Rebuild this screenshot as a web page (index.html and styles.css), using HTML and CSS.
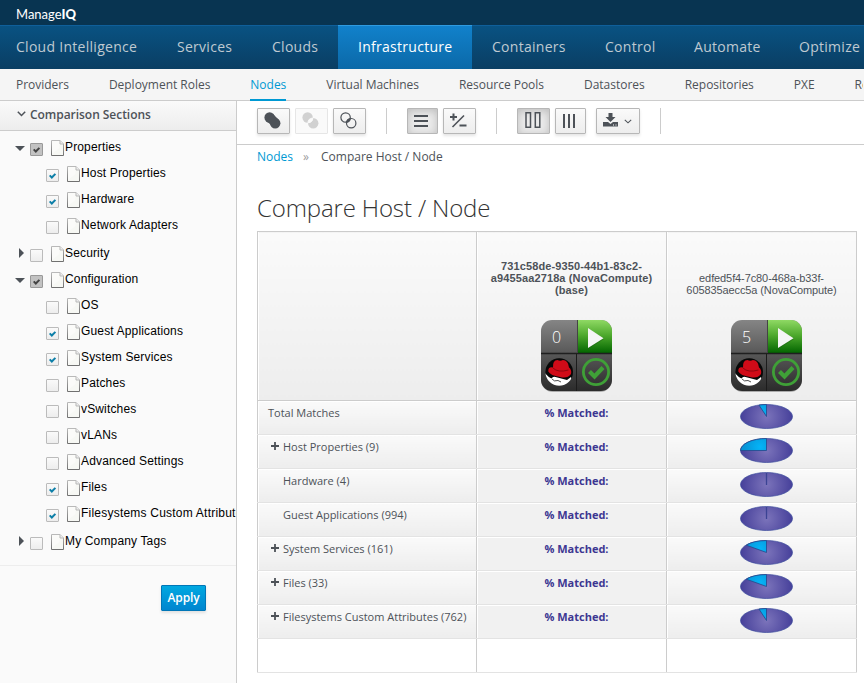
FILE: index.html
```html
<!DOCTYPE html>
<html lang="en">
<head>
<meta charset="utf-8">
<title>ManageIQ: Compare Host / Node</title>
<link rel="stylesheet" href="styles.css">
</head>
<body>
<svg class="defs" aria-hidden="true">
  <defs>
    <linearGradient id="g-page" x1="0" y1="0" x2="0" y2="1"><stop offset="0" stop-color="#b9b9b9"/><stop offset="1" stop-color="#707070"/></linearGradient>
    <linearGradient id="g-dark" x1="0" y1="0" x2="0" y2="1"><stop offset="0" stop-color="#858585"/><stop offset=".48" stop-color="#575757"/><stop offset="1" stop-color="#2b2b2b"/></linearGradient>
    <linearGradient id="g-green" x1="0" y1="0" x2="0" y2="1"><stop offset="0" stop-color="#8fd964"/><stop offset=".45" stop-color="#4faa2e"/><stop offset="1" stop-color="#036500"/></linearGradient>
    <radialGradient id="g-pie" gradientUnits="userSpaceOnUse" cx="26.5" cy="12.5" r="26"><stop offset="0" stop-color="#7c74bb"/><stop offset="1" stop-color="#46409a"/></radialGradient>
    <radialGradient id="g-cut" gradientUnits="userSpaceOnUse" cx="20" cy="9" r="16"><stop offset="0" stop-color="#05b4f8"/><stop offset="1" stop-color="#0794d6"/></radialGradient>
    <clipPath id="quad-clip"><rect x="1" y="0" width="71" height="71" rx="11"/></clipPath>
    <clipPath id="hat-clip"><circle cx="19.2" cy="52" r="13.8"/></clipPath>
  </defs>
  <symbol id="page" viewBox="0 0 13 16">
    <path d="M.5.5H9L12.500 4V15.500H.5z" fill="#f7f8f4" stroke="url(#g-page)"/>
    <path d="M1 1H8.500V8L1 14z" fill="#fff" opacity=".45"/>
    <path d="M9 .5V4H12.500" fill="#eee" stroke="#b9b9b9"/>
  </symbol>
  <symbol id="tick" viewBox="0 0 13 13"><path d="M3.700 6.400 5.800 8.500 9.400 4.900" fill="none" stroke="currentColor" stroke-width="2"/></symbol>
  <symbol id="plus" viewBox="0 0 8 8"><path d="M4 0V8M0 4H8" stroke="#4d5258" stroke-width="1.800"/></symbol>
  <symbol id="quad" viewBox="0 0 73 73">
    <rect x="1" y="2" width="71" height="70" rx="12" fill="#000" opacity=".28"/>
    <g clip-path="url(#quad-clip)">
      <rect x="1" width="71" height="71" fill="url(#g-dark)"/>
      <rect x="38" width="35" height="33" fill="url(#g-green)"/>
      <path d="M1 33.500H72" stroke="#1f1f1f" stroke-width="1.400"/>
      <path d="M37.500 0V33" stroke="#444"/><path d="M36.500 34V71" stroke="#1c1c1c"/>
    </g>
    <path d="M48 9 64 19 48 29z" fill="#1c5e12" opacity=".5"/>
    <path d="M48 8 63.500 18.300 48 28z" fill="#f5f5f5"/>
    <circle cx="19.200" cy="52" r="13.800" fill="#080808"/>
    <g clip-path="url(#hat-clip)">
      <path d="M4 52Q8 57 11.500 58.500 13 56 15.500 57L27 60 31 57 34 67H5z" fill="#fff"/>
      <path d="M12 59Q14 62 18 60.500L21 62" stroke="#222" stroke-width=".8" fill="none"/>
      <path d="M13 47.500Q12.500 40 17.500 40 20 41.500 23 40 28 40 29 47.500 32 50 31 54 27.500 59 20 57 10.500 55.500 8.300 51.500 8 46.500 13 47.500z" fill="#d00b18"/>
      <path d="M13 48Q18 53 28.500 50" stroke="#8d0710" fill="none"/>
    </g>
    <circle cx="56" cy="52" r="12.600" fill="none" stroke="#3fa037" stroke-width="2.800"/>
    <path d="M49.500 51.500 54.500 56.500 63 47.500" fill="none" stroke="#3fa037" stroke-width="4.200"/>
  </symbol>
  <symbol id="pie" viewBox="0 0 53 25"><ellipse cx="26.500" cy="12.500" rx="26" ry="12" fill="url(#g-pie)" stroke="#3b4b9c" stroke-width=".7"/></symbol>
  <symbol id="pie-zero" viewBox="0 0 53 25"><use href="#pie"/><path d="M26.500 1V13" stroke="#3b4394" stroke-width="1.300"/></symbol>
  <symbol id="pie-small" viewBox="0 0 53 25"><use href="#pie"/><path d="M26.500 12.500 19 1.100Q23 .5 26.500 .5z" fill="url(#g-cut)" stroke="#25488a" stroke-width=".8"/></symbol>
  <symbol id="pie-mid" viewBox="0 0 53 25"><use href="#pie"/><path d="M26.500 12.500 6.300 5.200Q13 .7 26.500 .5z" fill="url(#g-cut)" stroke="#25488a" stroke-width=".8"/></symbol>
  <symbol id="pie-quarter" viewBox="0 0 53 25"><use href="#pie"/><path d="M26.500 12.500H.5A26 12 0 0 1 26.500 .5z" fill="url(#g-cut)" stroke="#25488a" stroke-width=".8"/></symbol>
</svg>

<header class="topbar"><span class="brand">Manage<b>IQ</b></span></header>
<nav class="mainnav">
  <a class="w-ci">Cloud Intelligence</a><a class="w-se">Services</a><a class="w-cl">Clouds</a><a class="w-in active">Infrastructure</a><a class="w-co">Containers</a><a class="w-ct">Control</a><a class="w-au">Automate</a><a>Optimize</a>
</nav>
<nav class="subnav">
  <a>Providers</a><a>Deployment Roles</a><a class="active">Nodes</a><a>Virtual Machines</a><a>Resource Pools</a><a>Datastores</a><a>Repositories</a><a>PXE</a><a>Requests</a>
</nav>

<div class="layout">
  <aside class="sidebar">
    <h2 class="section-title"><svg width="9" height="6" viewBox="0 0 9 6"><path d="M.8.8 4.500 4.500 8.200.8" fill="none" stroke="currentColor" stroke-width="1.500"/></svg>Comparison Sections</h2>
    <ul class="tree">
      <li class="open"><i class="arrow"></i><span class="box partial"><svg><use href="#tick"/></svg></span><svg class="page"><use href="#page"/></svg><span>Properties</span></li>
      <li class="child"><span class="box on"><svg><use href="#tick"/></svg></span><svg class="page"><use href="#page"/></svg><span>Host Properties</span></li>
      <li class="child"><span class="box on"><svg><use href="#tick"/></svg></span><svg class="page"><use href="#page"/></svg><span>Hardware</span></li>
      <li class="child last"><span class="box"></span><svg class="page"><use href="#page"/></svg><span>Network Adapters</span></li>
      <li class="closed"><i class="arrow"></i><span class="box"></span><svg class="page"><use href="#page"/></svg><span>Security</span></li>
      <li class="open"><i class="arrow"></i><span class="box partial"><svg><use href="#tick"/></svg></span><svg class="page"><use href="#page"/></svg><span>Configuration</span></li>
      <li class="child"><span class="box"></span><svg class="page"><use href="#page"/></svg><span>OS</span></li>
      <li class="child"><span class="box on"><svg><use href="#tick"/></svg></span><svg class="page"><use href="#page"/></svg><span>Guest Applications</span></li>
      <li class="child"><span class="box on"><svg><use href="#tick"/></svg></span><svg class="page"><use href="#page"/></svg><span>System Services</span></li>
      <li class="child"><span class="box"></span><svg class="page"><use href="#page"/></svg><span>Patches</span></li>
      <li class="child"><span class="box"></span><svg class="page"><use href="#page"/></svg><span>vSwitches</span></li>
      <li class="child"><span class="box"></span><svg class="page"><use href="#page"/></svg><span>vLANs</span></li>
      <li class="child"><span class="box"></span><svg class="page"><use href="#page"/></svg><span>Advanced Settings</span></li>
      <li class="child"><span class="box on"><svg><use href="#tick"/></svg></span><svg class="page"><use href="#page"/></svg><span>Files</span></li>
      <li class="child last"><span class="box on"><svg><use href="#tick"/></svg></span><svg class="page"><use href="#page"/></svg><span class="long">Filesystems Custom Attributes</span></li>
      <li class="closed"><i class="arrow"></i><span class="box"></span><svg class="page"><use href="#page"/></svg><span>My Company Tags</span></li>
    </ul>
    <div class="actions"><button class="apply">Apply</button></div>
  </aside>

  <main class="content">
    <div class="toolbar">
      <button class="btn w33"><svg width="17" height="17" viewBox="0 0 17 17" fill="#4d5258"><circle cx="5.600" cy="5.500" r="5.200"/><circle cx="11.200" cy="11.200" r="5.200"/><path d="M9 2 14.500 7.500 8 14 2 8.500z"/></svg></button>
      <button class="btn w33 off"><svg width="17" height="17" viewBox="0 0 17 17"><g fill="#d1d1d1"><circle cx="5.600" cy="5.500" r="5.200"/><circle cx="11.200" cy="11.200" r="5.200"/></g><path d="M6 10.800Q6 6.500 10.800 6 10.800 10.500 6 10.800z" fill="#fafafa" stroke="#fafafa"/></svg></button>
      <button class="btn w33"><svg width="17" height="17" viewBox="0 0 17 17"><path d="M6 10.800Q6 6.500 10.800 6 10.800 10.500 6 10.800z" fill="#4d5258"/><g fill="none" stroke="#4d5258" stroke-width="1.200"><circle cx="5.600" cy="5.500" r="4.700"/><circle cx="11.200" cy="11.200" r="4.700"/></g></svg></button>
      <i class="rule"></i>
      <button class="btn w31 down"><svg class="low" width="14" height="12" viewBox="0 0 14 12"><path d="M0 1H14M0 6H14M0 11H14" stroke="#4d5258" stroke-width="2"/></svg></button>
      <button class="btn w33"><svg width="17" height="15" viewBox="0 0 17 15"><path d="M0 4H7M3.500 .5V7.500M9.500 12.500H16.500" stroke="#4d5258" stroke-width="2"/><path d="M2.500 14 14 2.500" stroke="#4d5258" stroke-width="1.600"/></svg></button>
      <i class="rule"></i>
      <button class="btn w33 down"><svg width="16" height="16" viewBox="0 0 16 16"><path d="M1 .8H5.500V15.200H1zM10.300 .8H14.800V15.200H10.300z" fill="none" stroke="#4d5258" stroke-width="1.500"/></svg></button>
      <button class="btn w31"><svg class="low" width="12" height="14" viewBox="0 0 12 14"><path d="M1 0V14M6 0V14M11 0V14" stroke="#4d5258" stroke-width="2"/></svg></button>
      <button class="btn w44"><svg width="15" height="14" viewBox="0 0 15 14" fill="#4d5258"><path d="M5.500 0H9.500V4H12.500L7.500 9 2.500 4H5.500z"/><path d="M0 9H5L7.500 11 10 9H15V13.500H0z"/><path d="M10 12H11M12.500 12H13.500" stroke="#fff"/></svg><svg class="caret" width="8" height="5" viewBox="0 0 8 5"><path d="M.8.8 4 3.800 7.200.8" fill="none" stroke="#4d5258" stroke-width="1.100"/></svg></button>
      <i class="rule"></i>
    </div>
    <div class="crumbs"><a>Nodes</a><span class="sep">»</span><span>Compare Host / Node</span></div>
    <h1>Compare Host / Node</h1>

    <table class="compare">
      <colgroup><col class="c1"><col class="c2"><col class="c3"></colgroup>
      <thead><tr>
        <th></th>
        <th><div class="host base">731c58de-9350-44b1-83c2-<br>a9455aa2718a (NovaCompute)<br>(base)</div><div class="quad"><svg><use href="#quad"/></svg><span>0</span></div></th>
        <th><div class="host">edfed5f4-7c80-468a-b33f-<br>605835aecc5a (NovaCompute)</div><div class="quad"><svg><use href="#quad"/></svg><span>5</span></div></th>
      </tr></thead>
      <tbody>
        <tr><td class="total">Total Matches</td><td>% Matched:</td><td><svg class="pie"><use href="#pie-small"/></svg></td></tr>
        <tr><td><svg class="plus"><use href="#plus"/></svg>Host Properties (9)</td><td>% Matched:</td><td><svg class="pie"><use href="#pie-quarter"/></svg></td></tr>
        <tr><td class="leaf">Hardware (4)</td><td>% Matched:</td><td><svg class="pie"><use href="#pie-zero"/></svg></td></tr>
        <tr><td class="leaf">Guest Applications (994)</td><td>% Matched:</td><td><svg class="pie"><use href="#pie-zero"/></svg></td></tr>
        <tr><td><svg class="plus"><use href="#plus"/></svg>System Services (161)</td><td>% Matched:</td><td><svg class="pie"><use href="#pie-mid"/></svg></td></tr>
        <tr><td><svg class="plus"><use href="#plus"/></svg>Files (33)</td><td>% Matched:</td><td><svg class="pie"><use href="#pie-mid"/></svg></td></tr>
        <tr><td><svg class="plus"><use href="#plus"/></svg>Filesystems Custom Attributes (762)</td><td>% Matched:</td><td><svg class="pie"><use href="#pie-small"/></svg></td></tr>
        <tr class="empty"><td></td><td></td><td></td></tr>
      </tbody>
    </table>
  </main>
</div>
</body>
</html>
```
FILE: styles.css
```css
* { box-sizing: border-box; }
html, body { height: 100%; overflow: hidden; }
body { margin: 0; font: 12px/20px "Open Sans", sans-serif; color: #4d5258; background: #fff; display: flex; flex-direction: column; }
svg { display: block; flex: none; }
.defs { position: absolute; width: 0; height: 0; }

.topbar { height: 25px; flex: none; background: #083451; padding-left: 16px; }
.brand { display: block; font: 13px/29px Lato, sans-serif; color: #fff; }
.brand b { font-weight: 900; }

.mainnav { height: 44px; flex: none; display: flex; background: linear-gradient(#095282, #0a3e63); border-top: 1px solid #0f5f9a; }
.mainnav a { flex: none; height: 44px; margin-top: -1px; padding: 0 0 0 20px; line-height: 41px; font-size: 14px; letter-spacing: 0.28px; color: #bfc9d1; white-space: nowrap; border-top: 1px solid transparent; }
.mainnav .w-ci { width: 157px; padding-left: 16px; }
.mainnav .w-se { width: 95px; }
.mainnav .w-cl { width: 86px; }
.mainnav .w-in { width: 134px; }
.mainnav .w-co { width: 113px; }
.mainnav .w-ct { width: 89px; }
.mainnav .w-au { width: 105px; }
.mainnav .active { color: #fff; background: linear-gradient(#1181cb, #0b69a8); border-top-color: #2f9be0; }

.subnav { height: 32px; flex: none; display: flex; gap: 40px; padding-left: 16px; background: #f5f5f5; border-bottom: 1px solid #ccc; letter-spacing: -0.02px; }
.subnav a { flex: none; height: 32px; line-height: 31px; white-space: nowrap; }
.subnav a:last-child { flex: 0 1 8px; min-width: 0; overflow: hidden; }
.subnav .active { color: #0099d3; border-bottom: 2px solid #0099d3; }

.layout { flex: 1; display: flex; min-height: 0; }
.sidebar { width: 237px; flex: none; background: #fafafa; border-right: 1px solid #ccc; overflow: hidden; }
.section-title { margin: 0; height: 30px; display: flex; align-items: center; gap: 4px; padding: 0 0 2px 17px; font-size: 12px; line-height: 19px; font-weight: 600; letter-spacing: -0.04px; background: linear-gradient(#fafafa, #ededed); border-bottom: 1px solid #ccc; }
.section-title svg { margin-top: -1px; }
.tree { margin: 0; padding: 4px 0 10px; list-style: none; font: 12px/26px "Liberation Sans", Arial, sans-serif; letter-spacing: 0.15px; color: #000; border-bottom: 1px solid #ededed; }
.tree li { display: flex; align-items: flex-start; height: 26px; padding-left: 15px; white-space: nowrap; }
.tree .child { padding-left: 46px; }
.tree .last { height: 28px; }
.tree li > span:last-child { line-height: 25px; }
.tree .long { width: 155px; overflow: hidden; letter-spacing: 0.22px; }
.arrow { width: 15px; height: 26px; padding: 11px 0 0; display: block; }
.arrow::before { content: ""; display: block; width: 0; height: 0; }
.open .arrow::before { border: 5px solid transparent; border-top-color: #4d5258; border-bottom: 0; }
.closed .arrow { padding: 7px 0 0 4px; }
.closed .arrow::before { border: 5px solid transparent; border-left-color: #4d5258; border-right: 0; }
.box { width: 13px; height: 13px; margin: 8px 8px 0 0; border: 1px solid #bbb; border-radius: 1px; background: linear-gradient(#fafafa, #ededed); }
.box svg { width: 13px; height: 13px; margin: -1px; }
.box.on { color: #0d7fa8; }
.box.partial { border-color: #999; background: #c2c2c2; color: #444; }
.page { width: 13px; height: 16px; margin: 5px 1px 0 0; }
.actions { display: flex; justify-content: flex-end; padding: 19px 30px 0 0; }
.apply { width: 45px; height: 26px; padding: 0; font: 600 12px/22px "Open Sans", sans-serif; letter-spacing: -0.1px; color: #fff; background: linear-gradient(#00a8e1, #0085cf); border: 1px solid #0076b7; border-radius: 1px; box-shadow: 0 2px 3px rgba(3,3,3,.1); }

.content { flex: 1; min-width: 0; }
.toolbar { height: 44px; display: flex; align-items: flex-start; gap: 5px; padding: 7px 0 0 20px; border-bottom: 1px solid #ccc; }
.btn { height: 26px; padding: 0 2px 2px 0; display: flex; align-items: center; justify-content: center; gap: 6px; flex: none; background: linear-gradient(#fafafa, #ededed); border: 1px solid #b7b7b7; border-radius: 1px; box-shadow: 0 2px 3px rgba(3,3,3,.1); }
.btn .low { margin-top: 2px; margin-left: -1px; }
.w33 { width: 33px; }
.w31 { width: 31px; }
.w44 { width: 44px; margin-left: 5px; }
.caret { margin-top: 2px; }
.btn.off { background: #fafafa; border-color: #e6e6e6; box-shadow: none; }
.btn.down { background: #ebebeb; box-shadow: inset 0 2px 8px rgba(3,3,3,.2); }
.rule { width: 1px; height: 26px; margin: 0 15px; background: #ccc; }

.crumbs { display: flex; padding: 2px 0 0 20px; }
.crumbs a { color: #0099d3; }
.crumbs .sep { margin: 0 12px 0 10px; color: #9c9c9c; }
h1 { margin: 28px 0 10px 20px; font-size: 24px; line-height: 26px; font-weight: 300; letter-spacing: -0.14px; color: #333; }

.compare { width: 600px; margin-left: 20px; table-layout: fixed; border-collapse: collapse; border: 1px solid #ccc; }
.c1 { width: 219px; }
.c2, .c3 { width: 190px; }
.compare th { height: 169px; padding: 0; border: 1px solid #ccc; vertical-align: bottom; font-weight: 400; background: linear-gradient(#fafafa, #ededed); box-shadow: inset 1px 0 #fff; }
.host { font: 11px/12px "Liberation Sans", Arial, sans-serif; letter-spacing: -0.1px; margin-bottom: 24px; }
.host.base { font-weight: 700; letter-spacing: 0.12px; }
.quad { position: relative; width: 73px; height: 73px; margin: 0 0 7px 63px; }
.quad svg { width: 73px; height: 73px; }
.quad span { position: absolute; left: 0; top: 7px; width: 33px; font-size: 16px; font-weight: 300; color: #fff; }
.compare td { height: 34px; padding: 2px 0 0; border: 1px solid #ccc; border-top-color: #e3e3e3; border-bottom-color: #e3e3e3; vertical-align: top; font-size: 11px; background: linear-gradient(#fafafa, #ededed); box-shadow: inset 1px 1px #fff; white-space: nowrap; }
.compare tbody tr:first-child td { border-top-color: #ccc; }
.compare td:first-child { padding-left: 13px; }
.compare td.total { padding-left: 10px; }
.compare td.leaf { padding-left: 25px; }
.compare td:nth-child(2) { text-align: center; font-weight: 700; color: #3d3792; background: #f1f1f1; padding-left: 10px; }
.compare td:nth-child(3) { padding-top: 3px; }
.compare .empty td { background: #fff; }
.plus { display: inline-block; width: 8px; height: 8px; margin: 0 4px 0 0; vertical-align: 1px; }
.pie { width: 53px; height: 25px; margin: 0 0 0 73px; }
```
